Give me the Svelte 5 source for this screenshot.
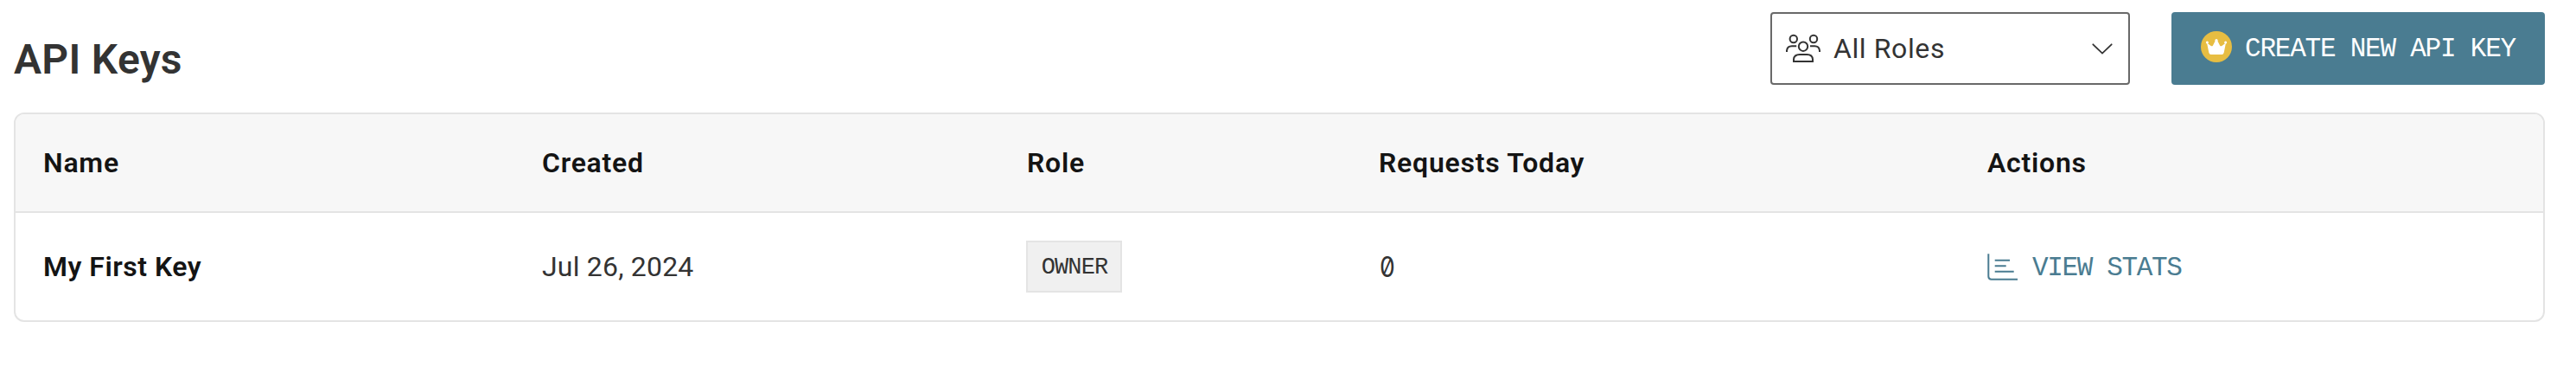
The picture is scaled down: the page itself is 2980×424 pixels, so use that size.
<script>
  const columns = ['Name', 'Created', 'Role', 'Requests Today', 'Actions'];
  const keys = [{ name: 'My First Key', created: 'Jul 26, 2024', role: 'OWNER', requests: 0 }];
</script>

<main>
  <header>
    <h1>API Keys</h1>
    <div class="tools">
      <button class="select">
        <svg class="users" width="40" height="40" viewBox="0 0 40 40">
          <circle cx="8.800" cy="9" r="4.200" />
          <circle cx="32" cy="9" r="4.200" />
          <circle cx="20" cy="17.700" r="5.200" />
          <path d="M1 24v-1.500Q1.500 17.200 7 17.200h5.200M28 17.200h5.200q5.300 0 5.800 5.300V24" />
          <path d="M9 35v-2.500Q9.500 27 16 27h8.500q6 0 6.500 5.500V35z" />
        </svg>
        <span class="role-text">All Roles</span>
        <svg class="chevron" width="24" height="16" viewBox="0 0 24 16">
          <path d="M1.300 3.300 12 13.600 22.700 3.300" />
        </svg>
      </button>
      <button class="create">
        <svg width="36" height="36" viewBox="0 0 36 36">
          <circle cx="18" cy="18" r="18" fill="#e7bd42" />
          <g fill="#fff">
            <circle cx="7.400" cy="13" r="1.500" />
            <circle cx="18" cy="10.600" r="1.600" />
            <circle cx="28.600" cy="13" r="1.500" />
            <path d="M7 13.500l5 3.700q1.300.500 2-.700l3-6h2l3 6q.700 1.200 2 .700l5-3.700-2.300 11.300q-.500 2.200-2.500 2.200H11.800q-2 0-2.500-2.200z" />
          </g>
        </svg>
        <span class="create-text">CREATE NEW API KEY</span>
      </button>
    </div>
  </header>

  <section class="table">
    <div class="row head">
      {#each columns as column, i}
        <span class:indent={i === 1 || i === 2}>{column}</span>
      {/each}
    </div>
    {#each keys as key}
      <div class="row body">
        <strong>{key.name}</strong>
        <span class="date">{key.created}</span>
        <span><span class="badge"><span>{key.role}</span></span></span>
        <span class="count">{key.requests}</span>
        <span class="view">
          <svg width="36" height="32" viewBox="0 0 36 32">
            <path d="M1.300 1.300v26q0 3.400 3.400 3.400H35M8.700 8.700H26M8.700 15.300H21.700M8.700 21.800H30.700" />
          </svg>
          <span class="view-text">VIEW STATS</span>
        </span>
      </div>
    {/each}
  </section>
</main>

<style>
  :global(body) { background: #fff; }
  main {
    box-sizing: border-box;
    width: 2980px;
    height: 424px;
    padding: 14px 36px 0 16px;
    font-family: Roboto, sans-serif;
    font-size: 32px;
    color: #333;
  }
  header { display: flex; justify-content: space-between; height: 116px; }
  h1 { margin: 27px 0 0; font-size: 48px; line-height: 56px; font-weight: 600; letter-spacing: 0.3px; }
  .tools { display: flex; gap: 48px; }
  button {
    box-sizing: border-box;
    display: flex;
    align-items: center;
    height: 84px;
    margin: 0;
    border-radius: 4px;
    font: inherit;
    color: inherit;
    white-space: nowrap;
  }
  svg { flex: none; fill: none; }
  .select { width: 416px; padding: 0 18px 0 16px; border: 2px solid #696969; background: #fff; }
  .users { stroke: #333; stroke-width: 2; }
  .role-text { margin-left: 15px; letter-spacing: 0.6px; }
  .chevron { margin-left: auto; stroke: #333; stroke-width: 1.8; stroke-linecap: round; }
  .create { width: 432px; padding: 0 0 4px 34px; border: 0; background: #4a7c91; color: #fff; }
  .create-text, .view-text, .badge { font-family: "Liberation Mono", monospace; }
  .create-text { margin-left: 15px; padding-top: 5px; font-size: 31px; letter-spacing: -1.22px; }
  .table { border: 2px solid #e4e4e4; border-radius: 12px; overflow: hidden; }
  .row {
    display: grid;
    grid-template-columns: 576px 561px 408px 704px 1fr;
    align-items: center;
    padding-left: 32px;
  }
  .head {
    height: 112px;
    background: #f7f7f7;
    border-bottom: 2px solid #e4e4e4;
    font-weight: 600;
    letter-spacing: 0.75px;
    color: #141414;
  }
  .indent { padding-left: 1px; }
  .body { height: 124px; }
  strong { font-weight: 600; letter-spacing: 0.5px; color: #141414; }
  .date { padding-left: 1px; letter-spacing: 0.2px; }
  .badge {
    box-sizing: border-box;
    display: flex;
    align-items: center;
    justify-content: center;
    width: 111px;
    height: 60px;
    border: 2px solid #e4e4e4;
    background: #f0f0f0;
    font-size: 27px;
    letter-spacing: -0.9px;
  }
  .badge span { padding-top: 2px; padding-left: 1px; }
  .count {
    padding-left: 1px;
    font-family: Inter, sans-serif;
    font-feature-settings: "zero";
    transform: scaleX(0.88);
    transform-origin: left;
  }
  .view { display: flex; align-items: center; color: #4a7c91; }
  .view svg { stroke: #4a7c91; stroke-width: 2; }
  .view-text { margin-left: 16px; padding-top: 2px; font-size: 31px; letter-spacing: -1.35px; }
</style>
